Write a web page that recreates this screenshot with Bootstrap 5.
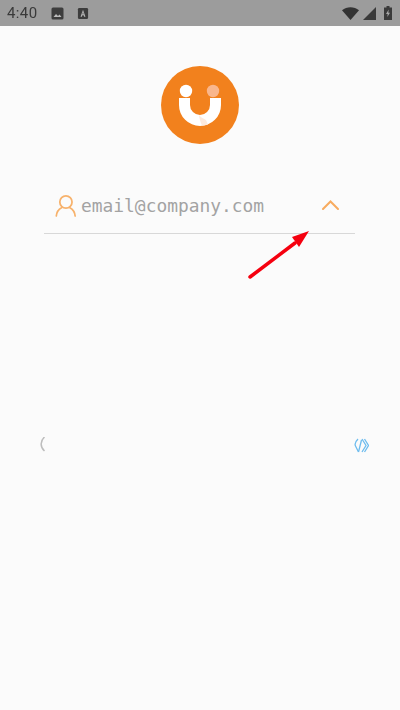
<!DOCTYPE html>
<html lang="en">
<head>
  <meta charset="UTF-8">
  <title>Login</title>
  <meta name="viewport" content="width=device-width, initial-scale=1">
  <link href="https://cdn.jsdelivr.net/npm/bootstrap@5.3.3/dist/css/bootstrap.min.css" rel="stylesheet">
  <style>
    html, body { height: 100%; }
    body { background: #fbfbfb; font-family: "Roboto", "Liberation Sans", sans-serif; overflow: hidden; }
    .page-wrap { width: 400px; height: 710px; }
    .status-bar { height: 26px; background: #9c9c9c; color: #333; padding: 0 8px 0 7px; }
    .status-time { font-size: 15px; letter-spacing: .4px; color: #3a3a3a; line-height: 26px; filter: blur(.3px); }
    .status-gap { margin-left: 13px; }
    .logo-wrap { padding-top: 40px; height: 119px; }
    .email-row { margin: 49px 45px 0 44px; height: 40px; border-bottom: 1px solid #d8d8d8; padding-left: 11px; padding-right: 16px; position: relative; }
    .email-text { font-family: "DejaVu Sans Mono", "Liberation Mono", monospace; font-size: 17.9px; color: #a3a3a3; line-height: 24px; margin-left: 5px; margin-bottom: 15px; }
    .user-icon { margin-bottom: 16px; }
    .chevron-icon { margin-bottom: 17px; }
    .red-arrow { position: absolute; left: 245px; top: 226px; }
    .swipe-row { margin-top: 201px; padding: 0 31px 0 38px; height: 20px; }
  </style>
</head>
<body>
  <div class="page-wrap position-relative">

    <div class="status-bar d-flex align-items-center">
      <span class="status-time">4:40</span>
      <svg class="status-gap" width="13" height="13" viewBox="0 0 13 13">
        <rect x="0.5" y="0.5" width="12" height="12" rx="1.5" fill="#3d3d3d"/>
        <path d="M2.500 10l2.500-3 2 2 1.500-1.500 2 2.500z" fill="#bcbcbc"/>
      </svg>
      <svg class="status-gap" width="12" height="13" viewBox="0 0 13 13">
        <rect x="1" y="0.500" width="11" height="12" rx="1.500" fill="#3d3d3d"/>
        <path d="M6.500 2.500L3.800 10h1.500l.5-1.500h1.400l.5 1.500h1.500zM6.500 5l.5 2.300H6z" fill="#b5b5b5" fill-rule="evenodd"/>
      </svg>
      <div class="ms-auto d-flex align-items-center">
        <svg width="17" height="13" viewBox="0 0 17 13"><path d="M0 3.200C4.800-.9 12.200-.9 17 3.200L8.500 13z" fill="#333"/></svg>
        <svg class="ms-1" width="13" height="13" viewBox="0 0 13 13"><path d="M13 0v13H0z" fill="#3a3a3a"/></svg>
        <svg class="ms-2" width="8" height="14" viewBox="0 0 8 14">
          <path d="M2.500 0h3v1.500H8V14H0V1.500h2.500z" fill="#3a3a3a"/>
          <path d="M4.700 3.500L2 8h1.700l-.4 3L6 6.700H4.300z" fill="#a8a8a8"/>
        </svg>
      </div>
    </div>

    <div class="logo-wrap d-flex justify-content-center">
      <svg width="78" height="78" viewBox="0 0 78 78">
        <circle cx="39" cy="39" r="39" fill="#f2811d"/>
        <path d="M23.500 32v7a15.500 15.500 0 0 0 31 0v-7" fill="none" stroke="#fff" stroke-width="11"/>
        <path d="M38 49c1.500 2 4 3.500 7 5l2 4.500c-2 .7-4 1-6 1-1.500-3.500-2.700-7-3-10.500z" fill="#fdeadd"/>
        <circle cx="25" cy="25" r="6.200" fill="#fff"/>
        <circle cx="52" cy="25" r="6.200" fill="#f9b68c"/>
      </svg>
    </div>

    <div class="email-row d-flex align-items-center">
      <svg class="user-icon" width="21" height="23" viewBox="0 0 24 26" fill="none" stroke="#f7b26c" stroke-width="2" stroke-linecap="round">
        <circle cx="12.500" cy="9" r="7"/>
        <path d="M1.500 25c.500-5 3-8 6-9.500M23 25c-.500-5-3-8-6-9.500"/>
      </svg>
      <span class="email-text">email@company.com</span>
      <svg class="chevron-icon ms-auto" width="17" height="10" viewBox="0 0 17 10" fill="none" stroke="#f7ab5f" stroke-width="2" stroke-linecap="round">
        <path d="M1 9l7.500-7.500L16 9"/>
      </svg>
    </div>

    <div class="swipe-row d-flex justify-content-between align-items-center">
      <svg width="8" height="16" viewBox="0 0 8 16" fill="none" stroke="#bdbdbd" stroke-width="1.500">
        <path d="M6.500 0C2 4 2 10 6.500 14"/>
      </svg>
      <svg width="15" height="15" viewBox="0 0 15 15" fill="none" stroke="#6dbcee" stroke-width="1.300">
        <path d="M4 1C1 4 0.500 6 1.500 8s2 4 3 6"/>
        <path d="M4.500 14c1-4 2-8 3-12"/>
        <path d="M8 1l4 6.500-4 6.500M10.500 1l4 6.500-4 6.500"/>
      </svg>
    </div>

    <svg class="red-arrow" width="68" height="56" viewBox="0 0 68 56">
      <path d="M5 51L50 17" stroke="#f5000f" stroke-width="3.500" stroke-linecap="round"/>
      <path d="M64 5L47 11l7 10z" fill="#f5000f"/>
    </svg>

  </div>
  <script src="https://cdn.jsdelivr.net/npm/bootstrap@5.3.3/dist/js/bootstrap.bundle.min.js"></script>
</body>
</html>
